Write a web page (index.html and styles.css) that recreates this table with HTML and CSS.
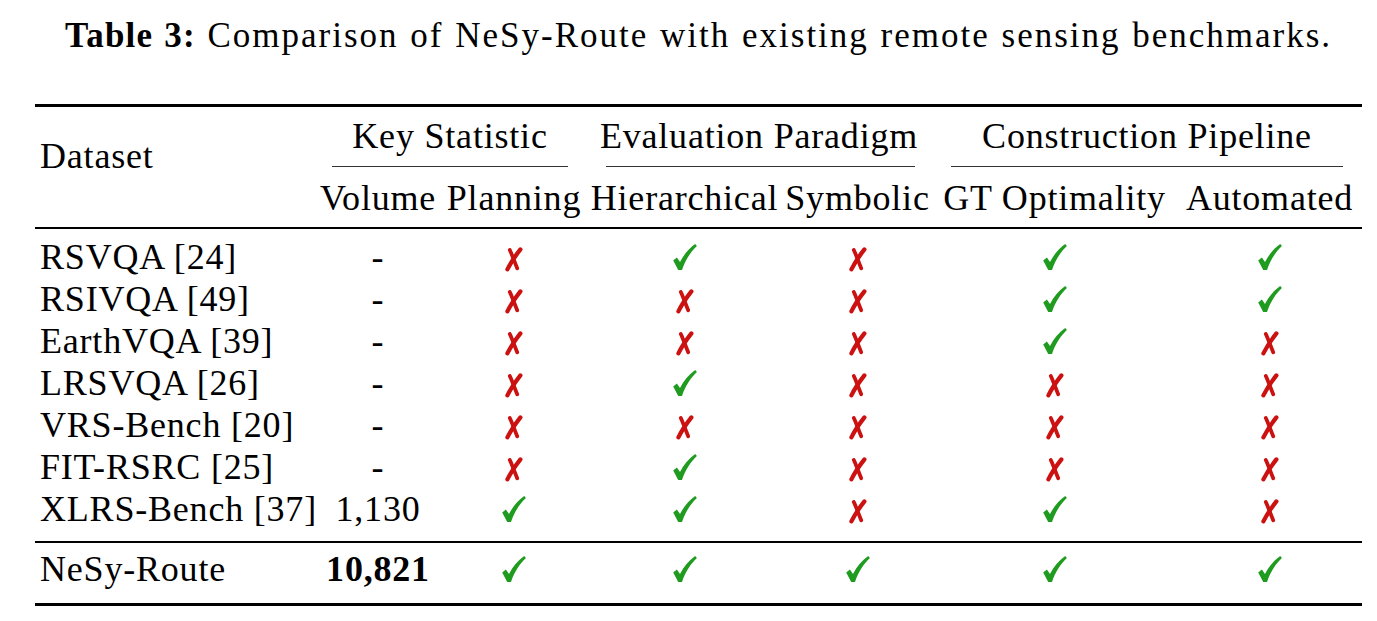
FILE: index.html
```html
<!DOCTYPE html>
<html>
<head>
<meta charset="utf-8">
<link rel="stylesheet" href="styles.css">
</head>
<body>
<svg class="defs" width="0" height="0" aria-hidden="true">
  <defs>
    <symbol id="chk" viewBox="0 0 24 26">
      <path d="M0.2,16.6 L3.9,13.4 L7,18 C10.6,11 15.8,4.4 22.2,0 L23.9,2 C17.8,7.8 12.6,15.4 9,25.9 L5.2,25.9 Z"/>
    </symbol>
    <symbol id="crs" viewBox="0 0 18 25">
      <path d="M15.4,2.4 C11,8 6,15 2.4,22.4" fill="none" stroke-width="4.2" stroke-linecap="round"/>
      <path d="M4.8,3 C7.2,8 9.6,15 12.2,21.2" fill="none" stroke-width="3.8" stroke-linecap="round"/>
    </symbol>
  </defs>
</svg>
<div class="page">
  <p class="caption"><b>Table 3:</b> Comparison of NeSy-Route with existing remote sensing benchmarks.</p>
  <div class="tbl">
    <div class="rule thick"></div>

    <div class="cell hd-dataset">Dataset</div>
    <div class="cell grp g1">Key Statistic</div>
    <div class="cell grp g2">Evaluation Paradigm</div>
    <div class="cell grp g3">Construction Pipeline</div>

    <div class="cmid g1"></div>
    <div class="cmid g2"></div>
    <div class="cmid g3"></div>

    <div class="cell sub c2">Volume</div>
    <div class="cell sub c3">Planning</div>
    <div class="cell sub c4">Hierarchical</div>
    <div class="cell sub c5">Symbolic</div>
    <div class="cell sub c6">GT Optimality</div>
    <div class="cell sub c7">Automated</div>

    <div class="rule mid"></div>

    <div class="body">
      <div class="row first">
        <div class="cell name">RSVQA [24]</div><div class="cell ctr">-</div>
        <div class="cell ctr"><svg class="x"><use href="#crs"/></svg></div>
        <div class="cell ctr"><svg class="v"><use href="#chk"/></svg></div>
        <div class="cell ctr"><svg class="x"><use href="#crs"/></svg></div>
        <div class="cell ctr"><svg class="v"><use href="#chk"/></svg></div>
        <div class="cell ctr"><svg class="v"><use href="#chk"/></svg></div>
      </div>
      <div class="row">
        <div class="cell name">RSIVQA [49]</div><div class="cell ctr">-</div>
        <div class="cell ctr"><svg class="x"><use href="#crs"/></svg></div>
        <div class="cell ctr"><svg class="x"><use href="#crs"/></svg></div>
        <div class="cell ctr"><svg class="x"><use href="#crs"/></svg></div>
        <div class="cell ctr"><svg class="v"><use href="#chk"/></svg></div>
        <div class="cell ctr"><svg class="v"><use href="#chk"/></svg></div>
      </div>
      <div class="row">
        <div class="cell name">EarthVQA [39]</div><div class="cell ctr">-</div>
        <div class="cell ctr"><svg class="x"><use href="#crs"/></svg></div>
        <div class="cell ctr"><svg class="x"><use href="#crs"/></svg></div>
        <div class="cell ctr"><svg class="x"><use href="#crs"/></svg></div>
        <div class="cell ctr"><svg class="v"><use href="#chk"/></svg></div>
        <div class="cell ctr"><svg class="x"><use href="#crs"/></svg></div>
      </div>
      <div class="row">
        <div class="cell name">LRSVQA [26]</div><div class="cell ctr">-</div>
        <div class="cell ctr"><svg class="x"><use href="#crs"/></svg></div>
        <div class="cell ctr"><svg class="v"><use href="#chk"/></svg></div>
        <div class="cell ctr"><svg class="x"><use href="#crs"/></svg></div>
        <div class="cell ctr"><svg class="x"><use href="#crs"/></svg></div>
        <div class="cell ctr"><svg class="x"><use href="#crs"/></svg></div>
      </div>
      <div class="row">
        <div class="cell name">VRS-Bench [20]</div><div class="cell ctr">-</div>
        <div class="cell ctr"><svg class="x"><use href="#crs"/></svg></div>
        <div class="cell ctr"><svg class="x"><use href="#crs"/></svg></div>
        <div class="cell ctr"><svg class="x"><use href="#crs"/></svg></div>
        <div class="cell ctr"><svg class="x"><use href="#crs"/></svg></div>
        <div class="cell ctr"><svg class="x"><use href="#crs"/></svg></div>
      </div>
      <div class="row">
        <div class="cell name">FIT-RSRC [25]</div><div class="cell ctr">-</div>
        <div class="cell ctr"><svg class="x"><use href="#crs"/></svg></div>
        <div class="cell ctr"><svg class="v"><use href="#chk"/></svg></div>
        <div class="cell ctr"><svg class="x"><use href="#crs"/></svg></div>
        <div class="cell ctr"><svg class="x"><use href="#crs"/></svg></div>
        <div class="cell ctr"><svg class="x"><use href="#crs"/></svg></div>
      </div>
      <div class="row last">
        <div class="cell name">XLRS-Bench [37]</div><div class="cell ctr">1,130</div>
        <div class="cell ctr"><svg class="v"><use href="#chk"/></svg></div>
        <div class="cell ctr"><svg class="v"><use href="#chk"/></svg></div>
        <div class="cell ctr"><svg class="x"><use href="#crs"/></svg></div>
        <div class="cell ctr"><svg class="v"><use href="#chk"/></svg></div>
        <div class="cell ctr"><svg class="x"><use href="#crs"/></svg></div>
      </div>
    </div>

    <div class="rule mid"></div>

    <div class="body">
      <div class="row ours">
        <div class="cell name">NeSy-Route</div><div class="cell ctr"><b>10,821</b></div>
        <div class="cell ctr"><svg class="v"><use href="#chk"/></svg></div>
        <div class="cell ctr"><svg class="v"><use href="#chk"/></svg></div>
        <div class="cell ctr"><svg class="v"><use href="#chk"/></svg></div>
        <div class="cell ctr"><svg class="v"><use href="#chk"/></svg></div>
        <div class="cell ctr"><svg class="v"><use href="#chk"/></svg></div>
      </div>
    </div>

    <div class="rule thick"></div>
  </div>
</div>
</body>
</html>
```

FILE: styles.css
```css
html, body {
  margin: 0;
  padding: 0;
  background: #ffffff;
}
body {
  font-family: "Liberation Serif", "Times New Roman", serif;
  color: #000000;
}
.defs {
  position: absolute;
  width: 0;
  height: 0;
  overflow: hidden;
}
.page {
  width: 1327px;
  padding: 0 0 0 35px;
}
.caption {
  margin: 0;
  padding-top: 16px;
  height: 40px;
  line-height: 40px;
  font-size: 35px;
  letter-spacing: 2px;
  word-spacing: 1px;
  text-align: center;
  white-space: nowrap;
}
.caption b {
  font-weight: bold;
  letter-spacing: 1.2px;
}
.tbl {
  margin-top: 48px;
  display: grid;
  grid-template-columns: 279px 128px 144px 197px 149px 245px 185px;
  font-size: 36px;
  letter-spacing: 0.8px;
}
.rule {
  grid-column: 1 / -1;
  background: #000000;
}
.rule.thick {
  height: 3px;
}
.rule.mid {
  height: 2px;
}
.cell {
  line-height: 42px;
  height: 42px;
  white-space: nowrap;
}
.hd-dataset {
  grid-column: 1;
  grid-row: 2 / 5;
  padding: 28px 0 0 5px;
}
.grp {
  grid-row: 2;
  text-align: center;
  padding-top: 8px;
  height: 42px;
}
.g1 { grid-column: 2 / 4; }
.g2 { grid-column: 4 / 6; }
.g3 { grid-column: 6 / 8; }
.cmid {
  grid-row: 3;
  height: 1px;
  background: #333333;
  margin: 9px 19px 0 19px;
}
.cmid.g1 { margin-left: 18px; margin-right: 18px; }
.cmid.g2 { margin-left: 20px; margin-right: 17px; }
.sub {
  grid-row: 4;
  text-align: center;
  padding-top: 10px;
  padding-bottom: 8px;
}
.c2 { grid-column: 2; }
.c3 { grid-column: 3; }
.c4 { grid-column: 4; }
.c5 { grid-column: 5; }
.c6 { grid-column: 6; }
.c7 { grid-column: 7; }
.body {
  grid-column: 1 / -1;
  display: flex;
  flex-direction: column;
}
.row {
  display: grid;
  grid-template-columns: 279px 128px 144px 197px 149px 245px 185px;
}
.row.first { padding-top: 7px; }
.row.last { padding-bottom: 11px; }
.row.ours { padding-top: 5px; padding-bottom: 13px; }
.name {
  padding-left: 5px;
}
.ctr {
  text-align: center;
}
.ctr b {
  font-weight: bold;
}
svg.v {
  width: 24px;
  height: 26px;
  fill: #1f9b1f;
  vertical-align: -1px;
}
svg.x {
  width: 18px;
  height: 25px;
  stroke: #cc1111;
  fill: none;
  vertical-align: -3px;
}
```
